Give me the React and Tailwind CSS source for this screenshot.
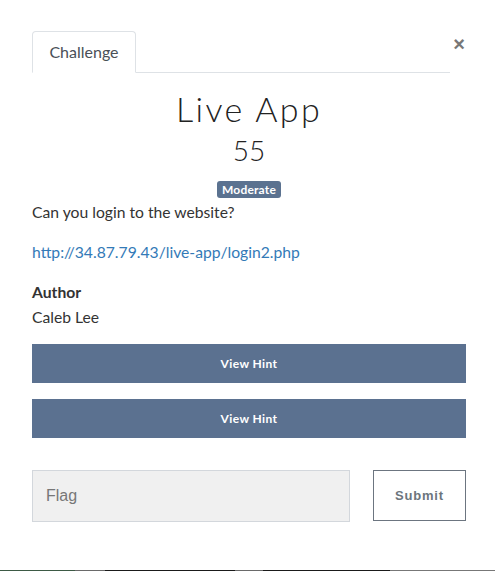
export default function App() {
  return (
    <div className="w-[495px] h-[571px] bg-white flex flex-col relative" style={{ fontFamily: "Lato, 'Liberation Sans', sans-serif" }}>
      <div className="flex-1 pl-[32px] pr-[29px] pt-[31px] flex flex-col">
        <div className="flex items-start">
          <div className="flex-1 flex border-b border-[#dee2e6] h-[42px]">
            <div className="h-[42px] w-[104px] border border-[#dee2e6] border-b-white rounded-t-[4px] bg-white flex items-center justify-center text-[16px] text-[#495057] -mb-px">
              Challenge
            </div>
          </div>
          <div className="w-[14px] ml-[2px] mt-[3px] text-[#777] text-[20px] leading-none font-bold flex justify-center" style={{ fontFamily: "'Liberation Sans', Arial, sans-serif" }}>×</div>
        </div>
        <div className="flex flex-col">
          <h1 className="text-center text-[34px] leading-[40px] font-light tracking-[2.4px] text-[#222] mt-[16px]">Live App</h1>
          <div className="text-center text-[28px] leading-[32px] font-light text-[#222] mt-[5px]">55</div>
          <div className="flex justify-center mt-[15px]">
            <span className="bg-[#5b7290] text-white text-[12px] font-bold leading-[17px] px-[5px] rounded-[3px] tracking-[0.2px]">Moderate</span>
          </div>
          <p className="text-[15.7px] text-[#333] leading-[20px] mt-[4px]">Can you login to the website?</p>
          <a className="text-[15.7px] text-[#337ab7] leading-[20px] mt-[20px] block">http://34.87.79.43/live-app/login2.php</a>
          <div className="text-[15.7px] font-bold text-[#333] leading-[20px] mt-[20px]">Author</div>
          <div className="text-[15.7px] text-[#333] leading-[20px] mt-[5px]">Caleb Lee</div>
          <button className="mt-[17px] h-[39px] w-full bg-[#5b7190] text-white text-[12px] font-bold tracking-[0.4px]">View Hint</button>
          <button className="mt-[16px] h-[39px] w-full bg-[#5b7190] text-white text-[12px] font-bold tracking-[0.4px]">View Hint</button>
          <div className="flex mt-[32px] items-start">
            <div className="w-[318px] h-[52px] bg-[#f0f0f0] border border-[#d3d7dc] flex items-center pl-[13px] text-[16px] text-[#777]" style={{ fontFamily: "'Liberation Sans', Arial, sans-serif" }}>Flag</div>
            <div className="flex-1" />
            <button className="w-[93px] h-[51px] border border-[#6c7580] bg-white text-[13px] font-bold text-[#6c757d] tracking-[0.8px]" style={{ fontFamily: "'Liberation Sans', Arial, sans-serif" }}>Submit</button>
          </div>
        </div>
      </div>
      <div className="h-px flex">
        <div className="w-[75px] bg-[#3d5a45]" />
        <div className="w-[30px] bg-[#6a6a6a]" />
        <div className="w-[130px] bg-[#1a1a1a]" />
        <div className="w-[28px] bg-[#6a6a6a]" />
        <div className="w-[127px] bg-[#1a1a1a]" />
        <div className="flex-1 bg-[#777]" />
      </div>
    </div>
  );
}
